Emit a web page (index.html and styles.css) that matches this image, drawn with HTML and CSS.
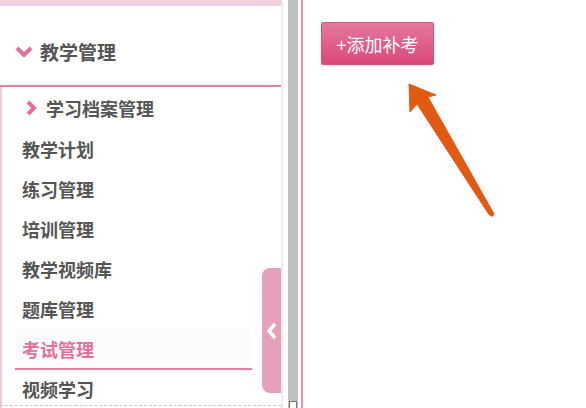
FILE: index.html
```html
<!DOCTYPE html>
<html lang="zh-CN">
<head>
<meta charset="utf-8">
<link rel="stylesheet" href="styles.css">
</head>
<body>
<div class="page">
  <aside class="sidebar">
    <div class="top-strip"></div>
    <div class="menu-head">
      <svg class="chev-down" width="18" height="12" viewBox="0 0 18 12"><path d="M2 2 L9 9 L16 2" fill="none" stroke="#e4709a" stroke-width="4"/></svg>
      <span>教学管理</span>
    </div>
    <div class="submenu">
      <div class="sub-head">
        <svg class="chev-right" width="11" height="16" viewBox="0 0 11 16"><path d="M2 2 L8 8 L2 14" fill="none" stroke="#e4709a" stroke-width="4"/></svg>
        <span>学习档案管理</span>
      </div>
      <div class="item">教学计划</div>
      <div class="item">练习管理</div>
      <div class="item">培训管理</div>
      <div class="item">教学视频库</div>
      <div class="item">题库管理</div>
      <div class="item active">考试管理</div>
      <div class="item">视频学习</div>
    </div>
    <div class="collapse-tab">
      <svg width="12" height="18" viewBox="0 0 12 18"><path d="M9 2 L3 9 L9 16" fill="none" stroke="#fff" stroke-width="3.5"/></svg>
    </div>
    <div class="dash"></div>
  </aside>
  <div class="gutter">
    <div class="scroll"><div class="scroll-end"></div></div>
  </div>
  <main class="main">
    <button class="add-btn">+添加补考</button>
    <svg class="arrow" width="120" height="150" viewBox="0 0 120 150">
      <path d="M3 1 L4 29 L11 21 L82 130 Q86 136 88 131 L22 14 L30 12 Z" fill="#e05a12" stroke="#e05a12" stroke-width="1" stroke-linejoin="round"/>
    </svg>
  </main>
</div>
</body>
</html>
```
FILE: styles.css
```css
html, body {
  margin: 0;
  padding: 0;
  background: #fff;
  font-family: "Noto Sans CJK SC", "Noto Sans", sans-serif;
}
.page {
  display: flex;
  width: 586px;
  height: 408px;
  overflow: hidden;
}
.sidebar {
  position: relative;
  width: 283px;
  flex: none;
  border-right: 2px solid #ececec;
  box-sizing: border-box;
  height: 408px;
}
.top-strip {
  height: 6px;
  background: #f1cfe0;
}
.menu-head {
  height: 81px;
  box-sizing: border-box;
  padding-top: 12px;
  display: flex;
  align-items: center;
  padding-left: 15px;
  border-bottom: 2px solid #e47fa3;
  color: #555;
  font-size: 19px;
  font-weight: bold;
}
.chev-down {
  margin-right: 7px;
  margin-top: 1px;
}
.submenu {
  border-left: 2px solid #f3cadb;
  height: 330px;
}
.sub-head {
  height: 42px;
  display: flex;
  align-items: center;
  padding-left: 24px;
  color: #555;
  font-size: 18px;
  font-weight: bold;
}
.chev-right {
  margin-right: 9px;
}
.item {
  height: 40px;
  line-height: 40px;
  margin-left: 13px;
  width: 237px;
  padding-left: 7px;
  box-sizing: border-box;
  color: #555;
  font-size: 18px;
  font-weight: bold;
}
.item.active {
  color: #e4709a;
  background: #fcfcfc;
  border-bottom: 2px solid #e47fa3;
  height: 41px;
  margin-bottom: -1px;
}
.collapse-tab {
  position: absolute;
  left: 262px;
  top: 268px;
  width: 19px;
  height: 125px;
  background: #e6a0bd;
  border-radius: 8px 0 0 8px;
  display: flex;
  align-items: center;
  justify-content: center;
}
.dash {
  position: absolute;
  left: 0;
  right: 0;
  bottom: 2px;
  border-bottom: 1px dashed #c8c8c8;
}
.gutter {
  width: 20px;
  flex: none;
  display: flex;
  border-right: 2px solid #e98fb0;
  box-sizing: border-box;
  padding-left: 5px;
}
.scroll {
  position: relative;
  width: 10px;
  background: #c0c0c0;
  height: 408px;
}
.scroll-end {
  position: absolute;
  left: 1px;
  bottom: 0;
  width: 6px;
  height: 6px;
  border: 1px solid #777;
  border-bottom: none;
  background: #fff;
}
.main {
  position: relative;
  flex: 1;
  padding: 22px 0 0 18px;
}
.add-btn {
  width: 113px;
  height: 43px;
  border: 1px solid #d9557f;
  border-radius: 2px;
  background: linear-gradient(#e4789e, #db4878);
  color: #fff;
  font-family: "Noto Sans CJK SC", sans-serif;
  font-size: 18px;
  padding: 0;
  box-shadow: 0 1px 2px rgba(0,0,0,0.15);
}
.arrow {
  position: absolute;
  left: 103px;
  top: 83px;
}
```
